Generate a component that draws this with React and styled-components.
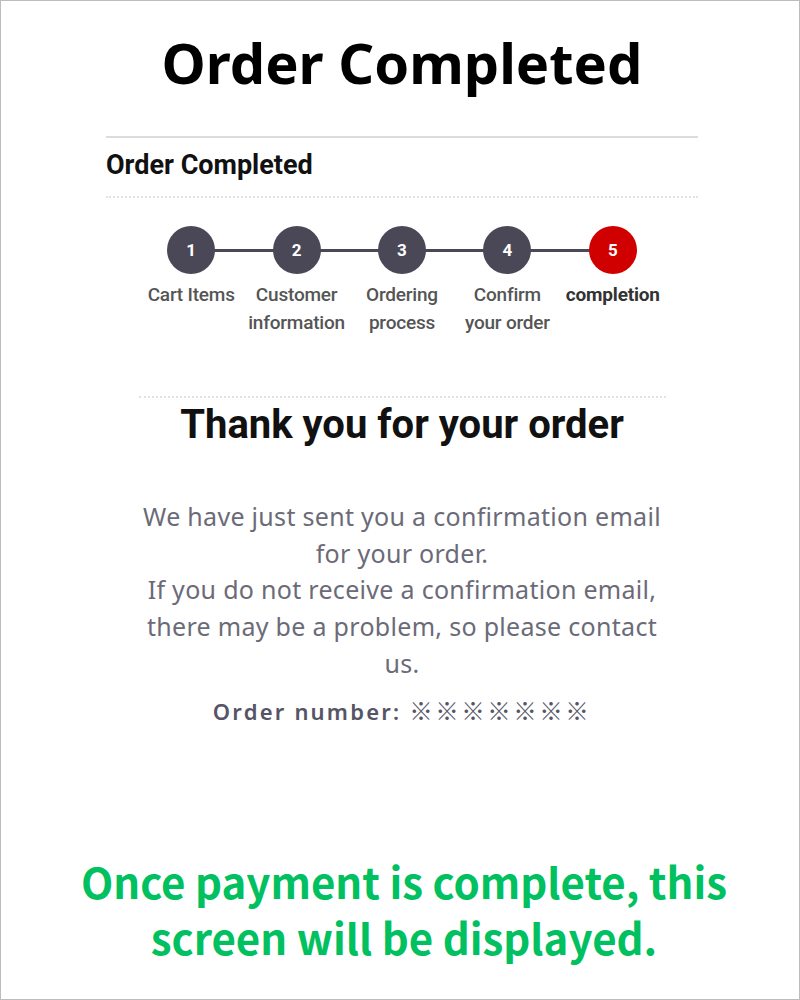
import React from "react";
import styled, { createGlobalStyle } from "styled-components";

const Global = createGlobalStyle`
  html, body { margin: 0; padding: 0; background: #fff; }
  * { box-sizing: border-box; }
`;

const Frame = styled.div`
  width: 800px;
  height: 1000px;
  border: 1px solid #bdbdbd;
  padding-left: 4px;
  display: flex;
  flex-direction: column;
  align-items: center;
  overflow: hidden;
`;

const Title = styled.h1`
  margin: 26px 0 0;
  font-family: "Noto Sans", sans-serif;
  font-weight: 700;
  font-size: 56px;
  line-height: 70px;
  color: #000;
  text-align: center;
`;

const Panel = styled.section`
  width: 592px;
  margin: 39px 0 0;
  display: flex;
  flex-direction: column;
  align-items: center;
`;

const PanelHeader = styled.h2`
  align-self: stretch;
  margin: 0;
  padding: 10px 0 14px 0;
  border-top: 2px solid #dcdcdc;
  border-bottom: 2px dotted #e2e2e2;
  font-family: Roboto, sans-serif;
  font-weight: 700;
  font-size: 27px;
  line-height: 34px;
  color: #111;
`;

const Inner = styled.div`
  width: 527px;
  display: flex;
  flex-direction: column;
  align-items: center;
`;

const Steps = styled.ol`
  list-style: none;
  margin: 28px 0 0;
  padding: 0;
  width: 100%;
  display: grid;
  grid-template-columns: repeat(5, 1fr);
`;

const Step = styled.li`
  position: relative;
  display: flex;
  flex-direction: column;
  align-items: center;
  &:not(:first-child)::before {
    content: "";
    position: absolute;
    top: 23px;
    left: -50%;
    width: 100%;
    height: 3px;
    background: #4a4857;
  }
`;

const Circle = styled.span`
  position: relative;
  z-index: 1;
  width: 48px;
  height: 48px;
  border-radius: 50%;
  background: ${(p) => (p.$active ? "#d00000" : "#4a4857")};
  color: #fff;
  display: flex;
  align-items: center;
  justify-content: center;
  font-family: Roboto, sans-serif;
  font-weight: 700;
  font-size: 17px;
`;

const StepLabel = styled.span`
  margin-top: 7px;
  font-family: Roboto, sans-serif;
  font-weight: ${(p) => (p.$active ? 700 : 500)};
  font-size: 19px;
  line-height: 28px;
  letter-spacing: -0.2px;
  color: ${(p) => (p.$active ? "#333" : "#555")};
  text-align: center;
`;

const Divider = styled.hr`
  width: 100%;
  margin: 59px 0 0;
  border: 0;
  border-top: 2px dotted #e2e2e2;
`;

const Thanks = styled.h3`
  margin: 3px 0 0;
  font-family: Roboto, sans-serif;
  font-weight: 700;
  font-size: 40px;
  line-height: 48px;
  color: #111;
  text-align: center;
`;

const Message = styled.p`
  margin: 49px 0 0;
  font-family: "Noto Sans", sans-serif;
  font-size: 25px;
  line-height: 36.7px;
  letter-spacing: 0.3px;
  color: #6b6b78;
  text-align: center;
  white-space: nowrap;
`;

const OrderNo = styled.p`
  margin: 12px 0 0;
  font-family: "Noto Sans", "Noto Sans CJK JP", sans-serif;
  font-weight: 600;
  font-size: 22px;
  line-height: 32px;
  letter-spacing: 2.2px;
  color: #555566;
  text-align: center;
`;

const Marks = styled.span`
  font-family: "Noto Sans CJK JP", sans-serif;
  font-weight: 700;
  font-size: 23.5px;
  letter-spacing: 2.5px;
`;

const Note = styled.p`
  margin: 126px 0 0;
  padding-left: 4px;
  font-family: "Noto Sans CJK JP", sans-serif;
  font-weight: 700;
  font-size: 42px;
  line-height: 56px;
  color: #00c060;
  text-align: center;
`;

const steps = [
  "Cart Items",
  "Customer information",
  "Ordering process",
  "Confirm your order",
  "completion",
];

const messageLines = [
  "We have just sent you a confirmation email",
  "for your order.",
  "If you do not receive a confirmation email,",
  "there may be a problem, so please contact",
  "us.",
];

export default function App() {
  return (
    <>
      <Global />
      <Frame>
        <Title>Order Completed</Title>
        <Panel>
          <PanelHeader>Order Completed</PanelHeader>
          <Inner>
            <Steps>
              {steps.map((s, i) => {
                const active = i === steps.length - 1;
                return (
                  <Step key={s}>
                    <Circle $active={active}>{i + 1}</Circle>
                    <StepLabel $active={active}>{s}</StepLabel>
                  </Step>
                );
              })}
            </Steps>
            <Divider />
            <Thanks>Thank you for your order</Thanks>
            <Message>
              {messageLines.map((line, i) => (
                <React.Fragment key={i}>
                  {i > 0 && <br />}
                  {line}
                </React.Fragment>
              ))}
            </Message>
            <OrderNo>
              Order number: <Marks>※※※※※※※</Marks>
            </OrderNo>
          </Inner>
        </Panel>
        <Note>
          Once payment is complete, this
          <br />
          screen will be displayed.
        </Note>
      </Frame>
    </>
  );
}
